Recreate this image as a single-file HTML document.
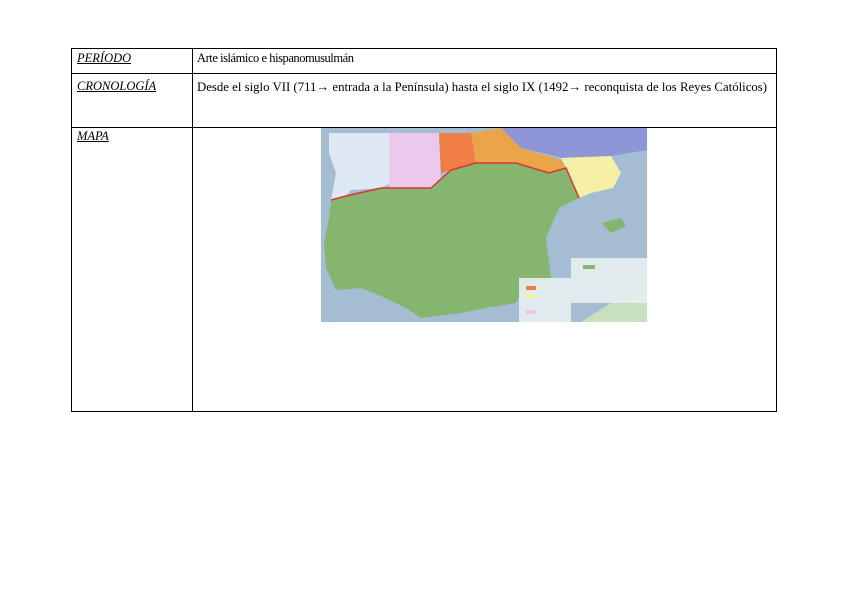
<!DOCTYPE html>
<html><head><meta charset="utf-8"><style>
body{margin:0;width:848px;height:599px;background:#fff;font-family:"Liberation Serif",serif;position:relative;overflow:hidden}
.l{position:absolute;background:#000}
.t{position:absolute;font-size:12.5px;color:#000;white-space:nowrap}
.u{font-style:italic;text-decoration:underline}
</style></head><body>
<div class="l" style="left:71px;top:48px;width:706px;height:1px"></div>
<div class="l" style="left:71px;top:73px;width:706px;height:1px"></div>
<div class="l" style="left:71px;top:127px;width:706px;height:1px"></div>
<div class="l" style="left:71px;top:411px;width:706px;height:1px"></div>
<div class="l" style="left:71px;top:48px;width:1px;height:364px"></div>
<div class="l" style="left:192px;top:48px;width:1px;height:364px"></div>
<div class="l" style="left:776px;top:48px;width:1px;height:364px"></div>
<div class="t u" style="left:77px;top:51px">PERÍODO</div>
<div class="t" style="left:197px;top:51px;letter-spacing:-0.45px">Arte islámico e hispanomusulmán</div>
<div class="t u" style="left:77px;top:79px">CRONOLOGÍA</div>
<div class="t" style="left:197px;top:80px;font-size:12.8px">Desde el siglo VII (711→ entrada a la Península) hasta el siglo IX (1492→ reconquista de los Reyes Católicos)</div>
<div class="t u" style="left:77px;top:129px">MAPA</div>
<svg style="position:absolute;left:321px;top:128px" width="326" height="194" viewBox="0 0 326 194">
<rect width="326" height="194" fill="#a5bdd3"/>
<polygon points="180,0 326,0 326,22 290,28 250,32 200,20" fill="#8f96d8"/>
<polygon points="8,5 68,5 70,55 60,60 30,62 25,68 10,72 15,45 8,25" fill="#dfe9f3"/>
<polygon points="68,5 118,5 120,55 110,60 85,62 68,60" fill="#ecc9ec"/>
<polygon points="118,5 150,5 155,35 130,42 120,45" fill="#f17f45"/>
<polygon points="150,5 180,0 200,20 240,32 245,40 228,45 195,35 155,35" fill="#eaa44a"/>
<polygon points="240,30 290,28 300,45 292,60 270,65 258,70 245,40" fill="#f5f0a6"/>
<polygon points="10,72 25,68 60,60 110,60 130,42 155,35 195,35 228,45 245,40 258,70 238,80 225,110 230,150 205,155 195,175 165,180 140,185 100,190 85,180 60,168 40,160 15,162 5,140 3,115 8,90" fill="#86b56f"/>
<polyline points="10,72 25,68 60,60 110,60 130,42 155,35 195,35 228,45 245,40 258,70" fill="none" stroke="#d33" stroke-width="1.5"/>
<polygon points="280,95 300,90 305,98 290,105" fill="#86b56f"/>
<polygon points="260,194 290,175 326,165 326,194" fill="#c8dfc0"/>
<rect x="250" y="130" width="76" height="45" fill="#e8eef0" opacity="0.9"/>
<rect x="198" y="150" width="52" height="44" fill="#e8eef0" opacity="0.9"/>
<rect x="205" y="158" width="10" height="4" fill="#f17f45"/><rect x="205" y="166" width="10" height="4" fill="#f5f0a6"/><rect x="205" y="174" width="10" height="4" fill="#dfe9f3"/><rect x="205" y="182" width="10" height="4" fill="#ecc9ec"/>
<rect x="262" y="137" width="12" height="4" fill="#86b56f"/>
</svg>
</body></html>
